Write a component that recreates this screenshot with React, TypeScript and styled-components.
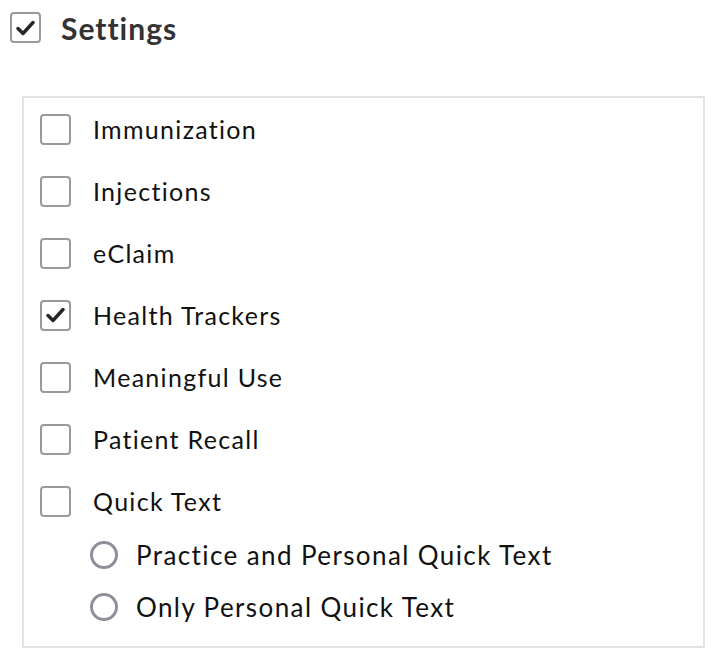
import styled, { createGlobalStyle } from "styled-components"

const GlobalStyle = createGlobalStyle`
    html, body {
        margin: 0;
        padding: 0;
        background: #ffffff;
    }
    body {
        font-family: Lato, "Open Sans", sans-serif;
        color: #111111;
    }
`

const Page = styled.div`
    width: 719px;
    height: 664px;
    box-sizing: border-box;
    padding: 12px 14px 0 10px;
`

const Header = styled.div`
    display: flex;
    align-items: center;
    gap: 20px;
    height: 31px;
`

const Title = styled.h1`
    margin: 0;
    font-size: 30px;
    font-weight: 700;
    letter-spacing: 1px;
    color: #333333;
    line-height: 1;
`

const Box = styled.span`
    flex: none;
    display: flex;
    align-items: center;
    justify-content: center;
    width: 31px;
    height: 31px;
    box-sizing: border-box;
    border: 2px solid #9a9a9a;
    border-radius: 4px;
    background: #ffffff;
`

const Panel = styled.div`
    margin: 53px 0 0 12px;
    border: 2px solid #e2e2e2;
    padding: 0 16px 17px;
    display: flex;
    flex-direction: column;
`

const Row = styled.label`
    display: flex;
    align-items: center;
    gap: 22px;
    height: 62px;
    font-size: 25px;
    letter-spacing: 1.3px;
    color: #111111;
`

const RadioGroup = styled.div`
    display: flex;
    flex-direction: column;
    gap: 8px;
    padding: 1px 0 0 50px;
`

const RadioRow = styled.label`
    display: flex;
    align-items: center;
    gap: 18px;
    height: 44px;
    font-size: 26px;
    letter-spacing: 1.4px;
    color: #111111;
`

const Radio = styled.span`
    flex: none;
    width: 28px;
    height: 28px;
    box-sizing: border-box;
    border: 3px solid #8e8f9b;
    border-radius: 50%;
`

const Check = () => (
    <svg width="19" height="16" viewBox="0 0 19 16">
        <path d="M2 8.5 L7 13.5 L17 2.5" fill="none" stroke="#262626" strokeWidth="3.4" strokeLinecap="round" strokeLinejoin="round" />
    </svg>
)

const Checkbox = ({ checked }: { checked?: boolean }) => (
    <Box>{checked ? <Check /> : null}</Box>
)

const items = [
    { label: "Immunization", checked: false },
    { label: "Injections", checked: false },
    { label: "eClaim", checked: false },
    { label: "Health Trackers", checked: true },
    { label: "Meaningful Use", checked: false },
    { label: "Patient Recall", checked: false },
    { label: "Quick Text", checked: false },
]

const radios = ["Practice and Personal Quick Text", "Only Personal Quick Text"]

const App = () => {
    return (
        <>
            <GlobalStyle />
            <Page>
                <Header>
                    <Checkbox checked />
                    <Title>Settings</Title>
                </Header>
                <Panel>
                    {items.map(item => (
                        <Row key={item.label}>
                            <Checkbox checked={item.checked} />
                            {item.label}
                        </Row>
                    ))}
                    <RadioGroup>
                        {radios.map(r => (
                            <RadioRow key={r}>
                                <Radio />
                                {r}
                            </RadioRow>
                        ))}
                    </RadioGroup>
                </Panel>
            </Page>
        </>
    )
}

export default App
